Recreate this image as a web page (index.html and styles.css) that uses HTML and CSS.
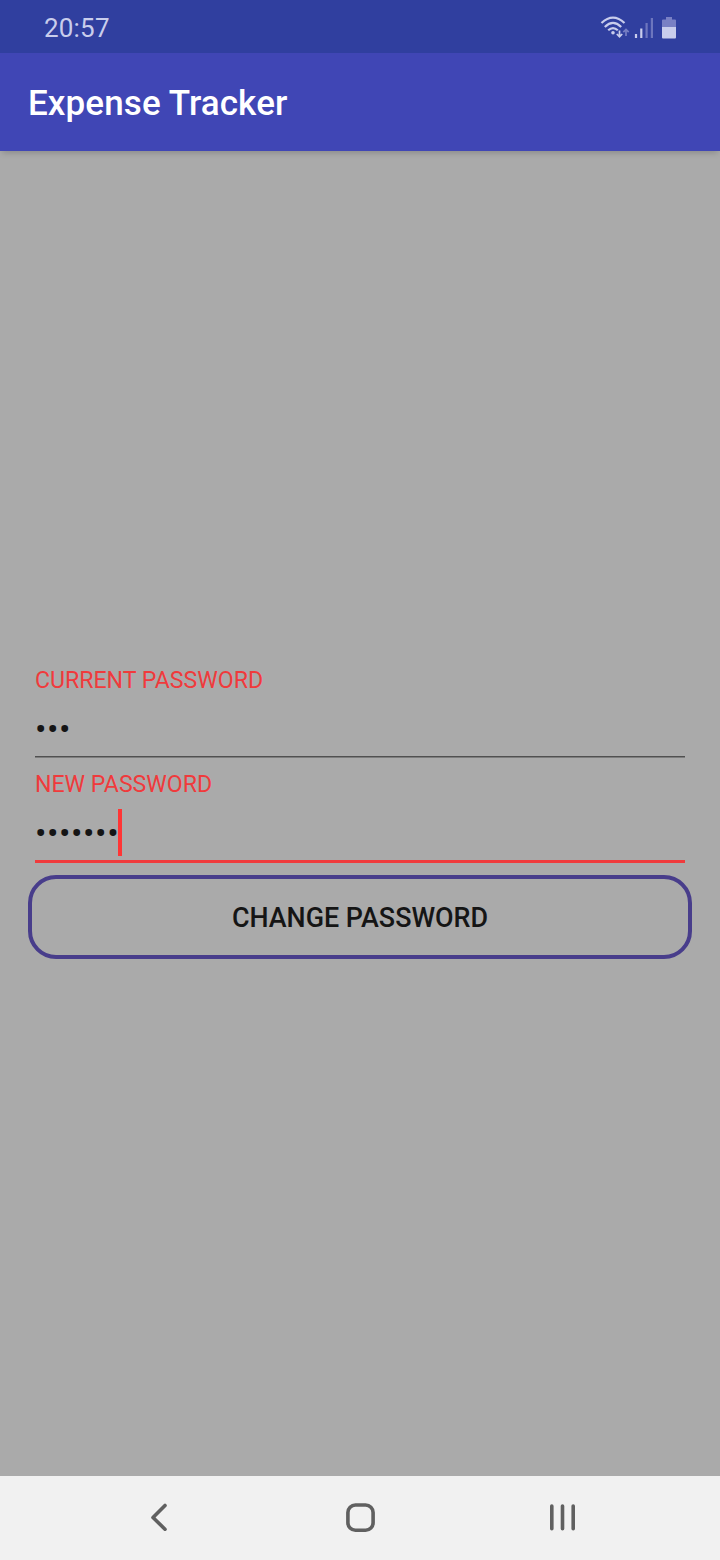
FILE: index.html
```html
<!DOCTYPE html>
<html lang="en">
<head>
<meta charset="utf-8">
<title>Expense Tracker</title>
<link rel="stylesheet" href="styles.css">
</head>
<body>
<div class="screen">
  <div class="status-bar">
    <span class="clock">20:57</span>
    <svg class="status-icons" width="80" height="28" viewBox="600 13 80 28" fill="none">
      <g stroke="#c9cdec" stroke-width="2.2">
        <path d="M601.500 23Q613 12.200 624.500 23"/>
        <path d="M604.800 27Q613 18.800 621.200 27"/>
        <path d="M608.200 30.300Q613 25.800 617.800 30.300"/>
        <path d="M619.500 30.500V36.500M616.800 34L619.500 36.800L622.200 34" stroke-width="1.700"/>
      </g>
      <circle cx="613" cy="32.800" r="1.800" fill="#c9cdec"/>
      <path d="M626 36V30M623.300 32.200L626 29.400L628.700 32.200" stroke="#777fc4" stroke-width="1.700"/>
      <path d="M636 34V38M641.300 28.500V38" stroke="#c9cdec" stroke-width="2.200"/>
      <path d="M646.600 23V38M651.900 18V38" stroke="#6d76be" stroke-width="2.200"/>
      <path d="M666 17H672V19.500H675Q676 19.500 676 20.500V27H662V20.500Q662 19.500 663 19.500H666Z" fill="#7980c4"/>
      <path d="M662 27H676V37.500Q676 38.500 675 38.500H663Q662 38.500 662 37.500Z" fill="#c9cdec"/>
    </svg>
  </div>
  <header class="app-bar"><h1 class="title">Expense Tracker</h1></header>
  <main class="content">
    <div class="field">
      <div class="label">CURRENT PASSWORD</div>
      <div class="value"><span class="dots">•••</span></div>
    </div>
    <div class="field focused">
      <div class="label">NEW PASSWORD</div>
      <div class="value"><span class="dots">•••••••</span><span class="caret"></span></div>
    </div>
    <button class="submit">CHANGE PASSWORD</button>
  </main>
  <nav class="nav-bar">
    <svg width="40" height="40" viewBox="0 0 40 40"><path d="M27 9.500L15 21.500L27 33.200"/></svg>
    <svg width="40" height="40" viewBox="0 0 40 40"><rect x="7.900" y="9" width="25.200" height="25.200" rx="7.500"/></svg>
    <svg width="40" height="40" viewBox="0 0 40 40"><path d="M9.800 10V32.800M20.500 10V32.800M31.200 10V32.800"/></svg>
  </nav>
</div>
</body>
</html>
```
FILE: styles.css
```css
body {
  margin: 0;
  font-family: Roboto, "Liberation Sans", sans-serif;
}

.screen {
  display: flex;
  flex-direction: column;
  width: 720px;
  height: 1560px;
  overflow: hidden;
  background: #aaaaaa;
}

.status-bar {
  display: flex;
  justify-content: space-between;
  height: 53px;
  box-sizing: border-box;
  padding: 13px 40px 0 44px;
  background: #303f9f;
}

.clock {
  font-size: 26px;
  line-height: 31px;
  letter-spacing: 0.2px;
  color: #c9cdec;
}

.app-bar {
  display: flex;
  align-items: center;
  height: 98px;
  padding-left: 28px;
  background: #4046b5;
  box-shadow: 0 4px 6px -2px rgba(0, 0, 0, 0.18);
}

.title {
  margin: 0;
  padding-top: 2px;
  font-size: 35px;
  font-weight: 500;
  letter-spacing: 0.1px;
  color: #ffffff;
}

.content {
  display: flex;
  flex: 1;
  flex-direction: column;
  padding: 515px 28px 0;
}

.field {
  height: 92px;
  margin: 0 7px 12px;
  background: linear-gradient(#505050, #505050) left 0 bottom 1px / 100% 1.5px no-repeat;
}

.field.focused {
  height: 93px;
  box-sizing: border-box;
  border-bottom: 3px solid #f03a3c;
  background: none;
}

.label {
  height: 28px;
  font-size: 23.1px;
  line-height: 30px;
  color: #f03a3c;
}

.value {
  display: flex;
  align-items: center;
  height: 47px;
  margin-top: 11px;
  font-size: 34px;
  line-height: 49px;
  letter-spacing: 0.55px;
  color: #151515;
}

.dots {
  padding-top: 2px;
}

.caret {
  width: 4px;
  height: 47px;
  margin-left: -1px;
  background: #ff3535;
}

.submit {
  height: 84px;
  padding: 1px 0 0;
  border: 4px solid #483d8b;
  border-radius: 28px;
  background: transparent;
  font: 500 26.9px Roboto, "Liberation Sans", sans-serif;
  color: #151515;
}

.nav-bar {
  display: grid;
  grid-template-columns: repeat(3, 40px);
  column-gap: 162px;
  justify-content: center;
  height: 64px;
  padding-top: 20px;
  background: #f1f1f1;
}

.nav-bar svg {
  fill: none;
  stroke: #606060;
  stroke-width: 3.6;
  stroke-linecap: round;
  stroke-linejoin: round;
}
```
